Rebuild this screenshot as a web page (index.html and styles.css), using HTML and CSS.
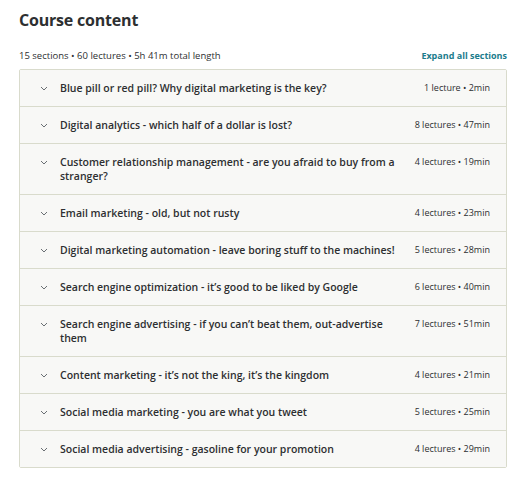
FILE: index.html
```html
<!DOCTYPE html>
<html lang="en">
<head>
    <meta charset="UTF-8">
    <meta name="viewport" content="width=device-width, initial-scale=1.0">
    <title>Course content</title>
    <link rel="stylesheet" href="styles.css">
</head>
<body>
    <div class="course">
        <h2 class="course-title">Course content</h2>
        <div class="course-meta">
            <span>15 sections • 60 lectures • 5h 41m total length</span>
            <a href="#" class="expand-link">Expand all sections</a>
        </div>

        <div class="sections">
            <div class="section-row">
                <span class="chevron"><svg width="8" height="5" viewBox="0 0 8 5"><path d="M1 1l3 3 3-3" fill="none" stroke="#6a6f73" stroke-width="1"/></svg></span>
                <span class="section-name">Blue pill or red pill? Why digital marketing is the key?</span>
                <span class="section-info">1 lecture • 2min</span>
            </div>
            <div class="section-row">
                <span class="chevron"><svg width="8" height="5" viewBox="0 0 8 5"><path d="M1 1l3 3 3-3" fill="none" stroke="#6a6f73" stroke-width="1"/></svg></span>
                <span class="section-name">Digital analytics - which half of a dollar is lost?</span>
                <span class="section-info">8 lectures • 47min</span>
            </div>
            <div class="section-row">
                <span class="chevron"><svg width="8" height="5" viewBox="0 0 8 5"><path d="M1 1l3 3 3-3" fill="none" stroke="#6a6f73" stroke-width="1"/></svg></span>
                <span class="section-name">Customer relationship management - are you afraid to buy from a stranger?</span>
                <span class="section-info">4 lectures • 19min</span>
            </div>
            <div class="section-row">
                <span class="chevron"><svg width="8" height="5" viewBox="0 0 8 5"><path d="M1 1l3 3 3-3" fill="none" stroke="#6a6f73" stroke-width="1"/></svg></span>
                <span class="section-name">Email marketing - old, but not rusty</span>
                <span class="section-info">4 lectures • 23min</span>
            </div>
            <div class="section-row">
                <span class="chevron"><svg width="8" height="5" viewBox="0 0 8 5"><path d="M1 1l3 3 3-3" fill="none" stroke="#6a6f73" stroke-width="1"/></svg></span>
                <span class="section-name">Digital marketing automation - leave boring stuff to the machines!</span>
                <span class="section-info">5 lectures • 28min</span>
            </div>
            <div class="section-row">
                <span class="chevron"><svg width="8" height="5" viewBox="0 0 8 5"><path d="M1 1l3 3 3-3" fill="none" stroke="#6a6f73" stroke-width="1"/></svg></span>
                <span class="section-name">Search engine optimization - it’s good to be liked by Google</span>
                <span class="section-info">6 lectures • 40min</span>
            </div>
            <div class="section-row">
                <span class="chevron"><svg width="8" height="5" viewBox="0 0 8 5"><path d="M1 1l3 3 3-3" fill="none" stroke="#6a6f73" stroke-width="1"/></svg></span>
                <span class="section-name">Search engine advertising - if you can’t beat them, out-advertise them</span>
                <span class="section-info">7 lectures • 51min</span>
            </div>
            <div class="section-row">
                <span class="chevron"><svg width="8" height="5" viewBox="0 0 8 5"><path d="M1 1l3 3 3-3" fill="none" stroke="#6a6f73" stroke-width="1"/></svg></span>
                <span class="section-name">Content marketing - it’s not the king, it’s the kingdom</span>
                <span class="section-info">4 lectures • 21min</span>
            </div>
            <div class="section-row">
                <span class="chevron"><svg width="8" height="5" viewBox="0 0 8 5"><path d="M1 1l3 3 3-3" fill="none" stroke="#6a6f73" stroke-width="1"/></svg></span>
                <span class="section-name">Social media marketing - you are what you tweet</span>
                <span class="section-info">5 lectures • 25min</span>
            </div>
            <div class="section-row">
                <span class="chevron"><svg width="8" height="5" viewBox="0 0 8 5"><path d="M1 1l3 3 3-3" fill="none" stroke="#6a6f73" stroke-width="1"/></svg></span>
                <span class="section-name">Social media advertising - gasoline for your promotion</span>
                <span class="section-info">4 lectures • 29min</span>
            </div>
        </div>
    </div>
</body>
</html>
```

FILE: styles.css
```css
body {
    margin: 0;
    padding: 0;
    background-color: #ffffff;
    font-family: "Open Sans", "Noto Sans", sans-serif;
    color: #2d2f31;
}

.course {
    padding: 8px 16px 0 19px;
}

.course-title {
    margin: 0;
    font-size: 16px;
    font-weight: 700;
    line-height: 24px;
    letter-spacing: -0.2px;
}

.course-meta {
    display: flex;
    justify-content: space-between;
    align-items: center;
    margin-top: 17px;
    margin-bottom: 6px;
    font-size: 9.5px;
    line-height: 14px;
}

.expand-link {
    color: #1c7c8c;
    font-size: 9px;
    font-weight: 700;
    text-decoration: none;
}

.sections {
    border: 1px solid #d9dbcc;
    border-radius: 2px;
}

.section-row {
    display: flex;
    align-items: flex-start;
    padding: 11px 16px 11px 20px;
    background-color: #f8f8f6;
    border-bottom: 1px solid #d9dbcc;
}

.section-row:last-child {
    border-bottom: none;
}

.chevron {
    width: 20px;
    flex-shrink: 0;
    padding-top: 4px;
    line-height: 0;
}

.section-name {
    flex: 1;
    font-size: 10.5px;
    font-weight: 600;
    line-height: 14px;
    padding-right: 18px;
}

.section-info {
    flex-shrink: 0;
    font-size: 9px;
    line-height: 14px;
    white-space: nowrap;
}
```
